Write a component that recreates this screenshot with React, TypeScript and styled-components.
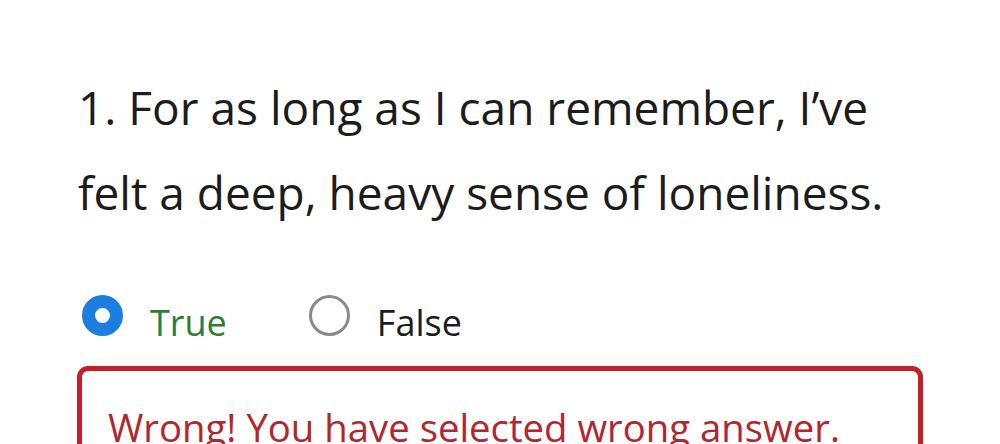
import React from "react";
import styled, { createGlobalStyle } from "styled-components";

const Global = createGlobalStyle`
  html, body { margin: 0; padding: 0; background: #ffffff; }
  body { font-family: "Open Sans", "Noto Sans", sans-serif; }
`;

const Page = styled.div`
  width: 1000px;
  height: 444px;
  overflow: hidden;
  background: #fff;
  padding: 65px 78px 0 77px;
  box-sizing: border-box;
`;

const Question = styled.p`
  margin: 0 0 0 1px;
  font-size: 46px;
  line-height: 85px;
  color: #1c1c1c;
`;

const Options = styled.div`
  display: flex;
  align-items: flex-start;
  margin-top: 55px;
  gap: 82px;
  padding-left: 5px;
`;

const Option = styled.label<{ $color: string }>`
  display: flex;
  align-items: flex-start;
  gap: 27px;
  font-size: 36px;
  line-height: 66px;
  color: ${(p) => p.$color};
`;

const Radio = styled.span<{ $checked?: boolean }>`
  flex: none;
  margin-top: 5px;
  width: 41px;
  height: 41px;
  border-radius: 50%;
  box-sizing: border-box;
  border: ${(p) => (p.$checked ? "13.5px solid #1b7ee0" : "3px solid #8a8a8a")};
  background: #fff;
`;

const Alert = styled.div`
  margin-top: 10px;
  border: 5px solid #c51f28;
  border-radius: 11px;
  padding: 30px 26px;
  width: 846px;
  box-sizing: border-box;
  font-size: 38.3px;
  color: #b3262d;
`;

export default function App() {
  return (
    <>
      <Global />
      <Page>
        <Question>
          1. For as long as I can remember, I’ve
          <br />
          felt a deep, heavy sense of loneliness.
        </Question>
        <Options>
          <Option $color="#2e7d32">
            <Radio $checked />
            True
          </Option>
          <Option $color="#1c1c1c">
            <Radio />
            False
          </Option>
        </Options>
        <Alert>Wrong! You have selected wrong answer.</Alert>
      </Page>
    </>
  );
}
